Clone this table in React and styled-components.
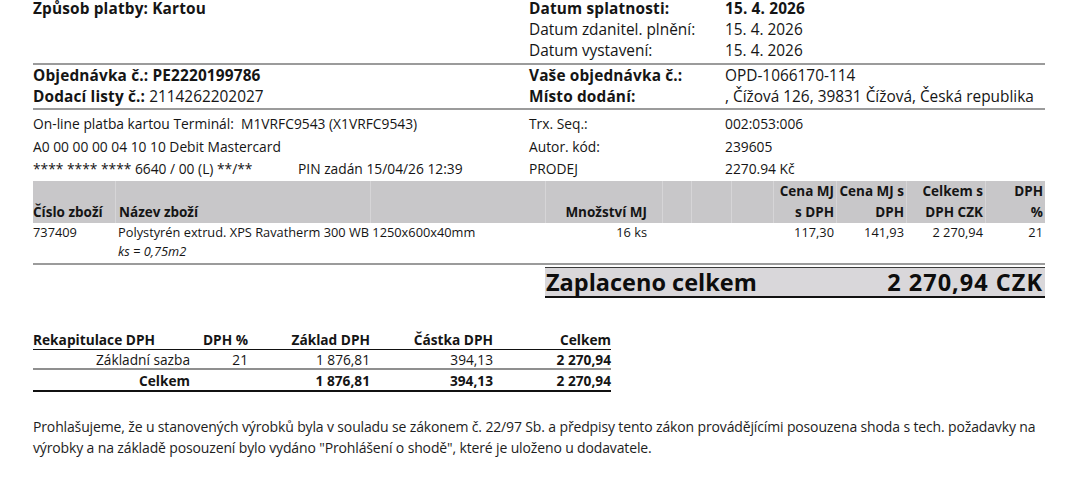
import styled, { createGlobalStyle } from "styled-components";

const GlobalStyle = createGlobalStyle`
  body {
    margin: 0;
    background: #fff;
    color: #151515;
    font-family: "Open Sans", "Noto Sans", sans-serif;
  }
`;

const Page = styled.div`
  width: 1012px;
  margin: -2px 0 0 33px;
`;

const InfoGrid = styled.div`
  display: grid;
  grid-template-columns: ${(p) => p.$cols};
  grid-auto-rows: ${(p) => p.$row}px;
  align-items: center;
  font-size: ${(p) => p.$size}px;
  padding: ${(p) => p.$pad || "0"};
  border-bottom: ${(p) => (p.$line ? "2px solid #9b9b9b" : "none")};
  white-space: nowrap;
`;

const Cell = styled.div`
  font-weight: ${(p) => (p.$bold ? 700 : 400)};
  grid-column: ${(p) => p.$span || "auto"};
  letter-spacing: ${(p) => (p.$bold ? "0.15px" : "0")};
`;

const B = styled.span`
  font-weight: 700;
  letter-spacing: 0.15px;
`;

const ITEM_COLS = "82px 255px 175px 117px 29px 40px 42px 63px 70px 79px 60px";

const ItemHead = styled.div`
  display: grid;
  grid-template-columns: ${ITEM_COLS};
  height: 42px;
  margin-top: 1px;
  background: #c8c7c9;
  font-size: 13.5px;
  font-weight: 700;
  line-height: 21px;
`;

const HeadCell = styled.div`
  display: flex;
  flex-direction: column;
  justify-content: flex-end;
  text-align: ${(p) => (p.$right ? "right" : "left")};
  padding: 0 ${(p) => p.$pr ?? 2}px 0 ${(p) => p.$pl ?? 0}px;
  border-left: ${(p) => (p.$first ? "none" : "1px solid #d6d5d7")};
  white-space: nowrap;
`;

const ItemRow = styled.div`
  display: grid;
  grid-template-columns: ${ITEM_COLS};
  font-size: 12.8px;
  line-height: 19px;
  padding-bottom: 2px;
  border-bottom: 2px solid #9b9b9b;
`;

const ItemCell = styled.div`
  grid-column: ${(p) => p.$span || "auto"};
  text-align: ${(p) => (p.$right ? "right" : "left")};
  padding: 0 ${(p) => p.$pr ?? 2}px 0 ${(p) => p.$pl ?? 0}px;
  white-space: nowrap;
`;

const Note = styled.div`
  font-style: italic;
`;

const TotalBar = styled.div`
  display: flex;
  justify-content: space-between;
  align-items: center;
  margin: 2px 0 0 512px;
  height: 28px;
  line-height: 28px;
  padding: 0 2px 0 1px;
  background: #d9d7da;
  border-top: 1px solid #3a3a3a;
  border-bottom: 2px solid #111;
  font-size: 23.5px;
  font-weight: 700;
  color: #0d0d0d;
`;

const Amount = styled.span`
  letter-spacing: 1px;
`;

const RECAP_COLS = "157px 58px 122px 123px 118px";

const Recap = styled.div`
  width: 578px;
  margin-top: 32px;
  font-size: 13.7px;
`;

const RecapRow = styled.div`
  display: grid;
  grid-template-columns: ${RECAP_COLS};
  height: ${(p) => p.$h}px;
  align-items: center;
  border-bottom: ${(p) => p.$border};
  font-weight: ${(p) => (p.$bold ? 700 : 400)};
`;

const RecapCell = styled.div`
  text-align: ${(p) => (p.$left ? "left" : "right")};
  font-weight: ${(p) => (p.$bold ? 700 : "inherit")};
  white-space: nowrap;
`;

const Declaration = styled.p`
  margin: 24px 0 0;
  width: 1012px;
  font-size: 14px;
  line-height: 21px;
  letter-spacing: -0.14px;
  color: #1d1d1d;
`;

const itemHeads = [
  { top: "", bottom: "Číslo zboží", first: true },
  { top: "", bottom: "Název zboží", pl: 3 },
  { top: "", bottom: "" },
  { top: "", bottom: "Množství MJ", right: true, pr: 15 },
  { top: "", bottom: "" },
  { top: "", bottom: "" },
  { top: "", bottom: "" },
  { top: "Cena MJ", bottom: "s DPH", right: true },
  { top: "Cena MJ s", bottom: "DPH", right: true },
  { top: "Celkem s", bottom: "DPH CZK", right: true },
  { top: "DPH", bottom: "%", right: true },
];

export default function App() {
  return (
    <>
      <GlobalStyle />
      <Page>
        <InfoGrid $cols="496px 196px 1fr" $row={21} $size={15.4} $pad="0 0 2px" $line>
          <Cell $bold>Způsob platby: Kartou</Cell>
          <Cell $bold>Datum splatnosti:</Cell>
          <Cell $bold>15. 4. 2026</Cell>
          <Cell />
          <Cell>Datum zdanitel. plnění:</Cell>
          <Cell>15. 4. 2026</Cell>
          <Cell />
          <Cell>Datum vystavení:</Cell>
          <Cell>15. 4. 2026</Cell>
        </InfoGrid>

        <InfoGrid $cols="496px 196px 1fr" $row={21} $size={15.4} $pad="0 0 1px" $line>
          <Cell $bold>Objednávka č.: PE2220199786</Cell>
          <Cell $bold>Vaše objednávka č.:</Cell>
          <Cell>OPD-1066170-114</Cell>
          <Cell>
            <B>Dodací listy č.:</B> 2114262202027
          </Cell>
          <Cell $bold>Místo dodání:</Cell>
          <Cell>, Čížová 126, 39831 Čížová, Česká republika</Cell>
        </InfoGrid>

        <InfoGrid $cols="265px 231px 196px 1fr" $row={22.5} $size={13.8} $pad="2.5px 0 0">
          <Cell $span="span 2">On-line platba kartou Terminál:&nbsp; M1VRFC9543 (X1VRFC9543)</Cell>
          <Cell>Trx. Seq.:</Cell>
          <Cell>002:053:006</Cell>
          <Cell $span="span 2">A0 00 00 00 04 10 10 Debit Mastercard</Cell>
          <Cell>Autor. kód:</Cell>
          <Cell>239605</Cell>
          <Cell>**** **** **** 6640 / 00 (L) **/**</Cell>
          <Cell>PIN zadán 15/04/26 12:39</Cell>
          <Cell>PRODEJ</Cell>
          <Cell>2270.94 Kč</Cell>
        </InfoGrid>

        <ItemHead>
          {itemHeads.map((h, i) => (
            <HeadCell key={i} $first={h.first} $right={h.right} $pr={h.pr} $pl={h.pl}>
              <span>{h.top || "\u00a0"}</span>
              <span>{h.bottom || "\u00a0"}</span>
            </HeadCell>
          ))}
        </ItemHead>

        <ItemRow>
          <ItemCell>737409</ItemCell>
          <ItemCell $span="span 2" $pl={3}>
            Polystyrén extrud. XPS Ravatherm 300 WB 1250x600x40mm
            <Note>ks = 0,75m2</Note>
          </ItemCell>
          <ItemCell $right $pr={15}>16 ks</ItemCell>
          <ItemCell />
          <ItemCell />
          <ItemCell />
          <ItemCell $right>117,30</ItemCell>
          <ItemCell $right>141,93</ItemCell>
          <ItemCell $right>2 270,94</ItemCell>
          <ItemCell $right>21</ItemCell>
        </ItemRow>

        <TotalBar>
          <span>Zaplaceno celkem</span>
          <Amount>2 270,94 CZK</Amount>
        </TotalBar>

        <Recap>
          <RecapRow $h={19} $bold $border="1.5px solid #111">
            <RecapCell $left>Rekapitulace DPH</RecapCell>
            <RecapCell>DPH %</RecapCell>
            <RecapCell>Základ DPH</RecapCell>
            <RecapCell>Částka DPH</RecapCell>
            <RecapCell>Celkem</RecapCell>
          </RecapRow>
          <RecapRow $h={18} $border="2px solid #8f8f8f">
            <RecapCell>Základní sazba</RecapCell>
            <RecapCell>21</RecapCell>
            <RecapCell>1 876,81</RecapCell>
            <RecapCell>394,13</RecapCell>
            <RecapCell $bold>2 270,94</RecapCell>
          </RecapRow>
          <RecapRow $h={20} $bold $border="2px solid #111">
            <RecapCell>Celkem</RecapCell>
            <RecapCell />
            <RecapCell>1 876,81</RecapCell>
            <RecapCell>394,13</RecapCell>
            <RecapCell>2 270,94</RecapCell>
          </RecapRow>
        </Recap>

        <Declaration>
          Prohlašujeme, že u stanovených výrobků byla v souladu se zákonem č. 22/97 Sb. a předpisy tento
          zákon provádějícími posouzena shoda s tech. požadavky na výrobky a na základě posouzení bylo
          vydáno "Prohlášení o shodě", které je uloženo u dodavatele.
        </Declaration>
      </Page>
    </>
  );
}
